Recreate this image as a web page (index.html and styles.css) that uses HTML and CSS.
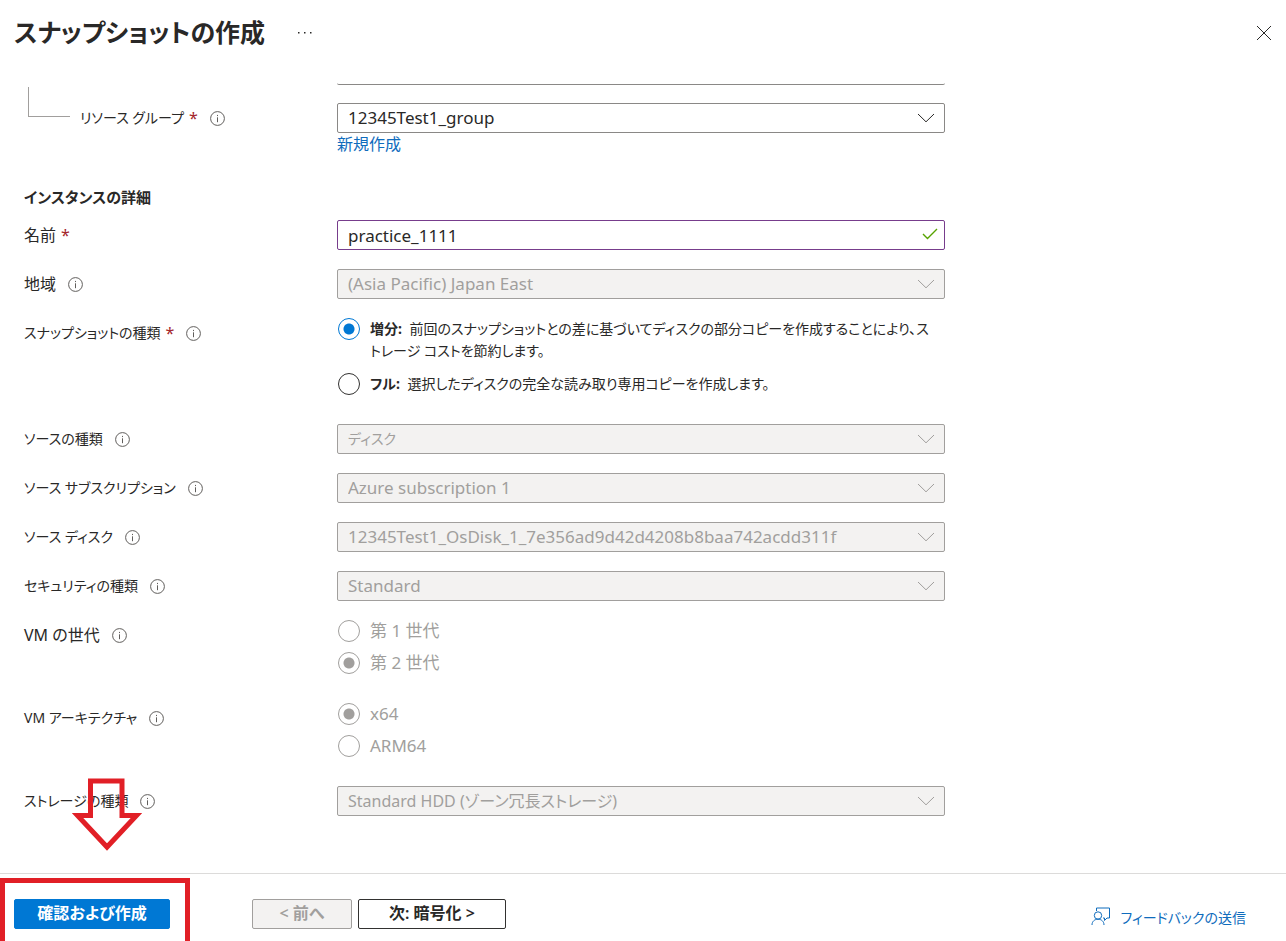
FILE: index.html
```html
<!DOCTYPE html>
<html lang="ja">
<head>
<meta charset="utf-8">
<title>スナップショットの作成</title>
<link rel="stylesheet" href="styles.css">
</head>
<body>
<svg class="sprite" aria-hidden="true">
  <symbol id="info" viewBox="0 0 15 15"><circle cx="7.5" cy="7.5" r="6.9"/><path d="M7.5 6.3v4.9M7.5 3.9v1.2"/></symbol>
  <symbol id="chevron" viewBox="0 0 18 10"><path d="M1 1l8 7.800l8-7.800"/></symbol>
</svg>
<header class="header">
  <h1 class="title">スナップショットの作成</h1>
  <button class="icon-button more" aria-label="その他"><svg width="16" height="4" viewBox="0 0 16 4"><path d="M1 1h1.500v1.500h-1.500zM7 1h1.500v1.500h-1.500zM13 1h1.500v1.500h-1.500z"/></svg></button>
  <button class="icon-button close" aria-label="閉じる"><svg width="16" height="16" viewBox="0 0 16 16"><path d="M1 1l14 14M15 1L1 15"/></svg></button>
</header>

<main class="form">
  <div class="row"><div class="field-end"></div></div>
  <div class="row">
    <div class="label nested"><label for="group">リソース グループ</label><span class="required">*</span><svg class="info"><use href="#info"/></svg></div>
    <div class="control">
      <div class="field"><select id="group"><option>12345Test1_group</option></select><svg class="chevron"><use href="#chevron"/></svg></div>
      <a class="create" href="#">新規作成</a>
    </div>
  </div>

  <h2 class="section">インスタンスの詳細</h2>
  <div class="row">
    <div class="label"><label class="kanji" for="name">名前</label><span class="required">*</span></div>
    <div class="field"><input class="valid" id="name" type="text" value="practice_1111"><svg class="check" viewBox="0 0 16 12"><path d="M1 6l4.500 4.500L15 1"/></svg></div>
  </div>
  <div class="row">
    <div class="label"><label class="kanji" for="region">地域</label><svg class="info"><use href="#info"/></svg></div>
    <div class="field"><select id="region" disabled><option>(Asia Pacific) Japan East</option></select><svg class="chevron"><use href="#chevron"/></svg></div>
  </div>
  <div class="row choices" role="radiogroup" aria-labelledby="kind">
    <div class="label"><span id="kind">スナップショットの種類</span><span class="required">*</span><svg class="info"><use href="#info"/></svg></div>
    <div class="radios described">
      <label class="radio"><input type="radio" name="kind" checked><span><b>増分:</b> 前回のスナップショットとの差に基づいてディスクの部分コピーを作成することにより、ストレージ コストを節約します。</span></label>
      <label class="radio"><input type="radio" name="kind"><span><b>フル:</b> 選択したディスクの完全な読み取り専用コピーを作成します。</span></label>
    </div>
  </div>
  <div class="row">
    <div class="label"><label for="source">ソースの種類</label><svg class="info"><use href="#info"/></svg></div>
    <div class="field"><select class="kana" id="source" disabled><option>ディスク</option></select><svg class="chevron"><use href="#chevron"/></svg></div>
  </div>
  <div class="row">
    <div class="label"><label for="subscription">ソース サブスクリプション</label><svg class="info"><use href="#info"/></svg></div>
    <div class="field"><select id="subscription" disabled><option>Azure subscription 1</option></select><svg class="chevron"><use href="#chevron"/></svg></div>
  </div>
  <div class="row">
    <div class="label"><label for="disk">ソース ディスク</label><svg class="info"><use href="#info"/></svg></div>
    <div class="field"><select id="disk" disabled><option>12345Test1_OsDisk_1_7e356ad9d42d4208b8baa742acdd311f</option></select><svg class="chevron"><use href="#chevron"/></svg></div>
  </div>
  <div class="row">
    <div class="label"><label for="security">セキュリティの種類</label><svg class="info"><use href="#info"/></svg></div>
    <div class="field"><select id="security" disabled><option>Standard</option></select><svg class="chevron"><use href="#chevron"/></svg></div>
  </div>
  <div class="row choices" role="radiogroup" aria-labelledby="generation">
    <div class="label"><span class="kanji" id="generation">VM の世代</span><svg class="info"><use href="#info"/></svg></div>
    <div class="radios">
      <label class="radio large"><input type="radio" name="generation" disabled><span>第 1 世代</span></label>
      <label class="radio large"><input type="radio" name="generation" disabled checked><span>第 2 世代</span></label>
    </div>
  </div>
  <div class="row choices" role="radiogroup" aria-labelledby="arch">
    <div class="label"><span id="arch">VM アーキテクチャ</span><svg class="info"><use href="#info"/></svg></div>
    <div class="radios">
      <label class="radio large"><input type="radio" name="arch" disabled checked><span>x64</span></label>
      <label class="radio large"><input type="radio" name="arch" disabled><span>ARM64</span></label>
    </div>
  </div>
  <div class="row">
    <div class="label"><label for="storage">ストレージの種類</label><svg class="info"><use href="#info"/></svg></div>
    <div class="field"><select class="mixed" id="storage" disabled><option>Standard HDD (ゾーン冗長ストレージ)</option></select><svg class="chevron"><use href="#chevron"/></svg></div>
  </div>
</main>

<footer class="footer">
  <button class="button primary">確認および作成</button>
  <button class="button previous" disabled>&lt; 前へ</button>
  <button class="button next">次: 暗号化 &gt;</button>
  <a class="feedback" href="#"><svg width="20" height="19" viewBox="0 0 20 19"><path d="M5.500 4V1h13v10h-2.500l-2.500 2.500v-2.500h-1.500"/><circle cx="7" cy="8.500" r="3.700"/><path d="M1 18c0-3.600 2.600-5.800 6-5.800s6 2.200 6 5.800"/></svg>フィードバックの送信</a>
  <div class="highlight"></div>
  <svg class="arrow" viewBox="0 0 70 74"><path d="M18.500 3h31.500v34.500h14.500L35 69L5.500 37.500h13z"/></svg>
</footer>
</body>
</html>
```
FILE: styles.css
```css
* { box-sizing: border-box; }
body {
  margin: 0;
  min-height: 100vh;
  display: flex;
  flex-direction: column;
  background: #fff;
  color: #292827;
  font: 14px/22px "Noto Sans", "Noto Sans CJK JP", sans-serif;
  font-feature-settings: "palt";
}
button, input, select {
  font: inherit;
  font-feature-settings: inherit;
  color: inherit;
}
svg { fill: none; stroke: currentColor; flex: none; }
a { color: #0f6cbd; text-decoration: none; }
.sprite { position: absolute; width: 0; height: 0; }

.header {
  display: flex;
  align-items: center;
  height: 64px;
  margin-bottom: 18px;
  padding: 0 14px;
}
.title { margin: 0; font-size: 25px; line-height: 36px; font-weight: 700; }
.icon-button {
  display: flex;
  padding: 2px 0 0;
  border: 0;
  background: none;
}
.more { margin-left: 32px; }
.more svg { fill: currentColor; stroke: none; }
.close { margin-left: auto; }

.form { flex: 1; padding: 0 24px; }
.row {
  display: grid;
  grid-template-columns: 313px minmax(0, 608px);
  margin-bottom: 19px;
}
.choices { margin-bottom: 29px; }
.field-end {
  grid-column: 2;
  height: 3px;
  border-bottom: 1px solid #8a8886;
  border-radius: 0 0 2px 2px;
}
.label {
  display: flex;
  align-items: center;
  height: 30px;
  white-space: nowrap;
}
.kanji { font-size: 16px; }
.nested::before {
  content: "";
  align-self: flex-start;
  width: 41px;
  height: 29px;
  margin: -16px 10px 0 4px;
  border: solid #a19f9d;
  border-width: 0 0 1px 1px;
}
.required { margin-left: 5px; color: #a4262c; font-size: 16px; }
.info { width: 15px; height: 15px; margin-left: 12px; color: #605e5c; }
.field { position: relative; height: 30px; }
.field select, .field input {
  display: block;
  width: 100%;
  height: 30px;
  padding: 0 40px 0 10px;
  border: 1px solid #8a8886;
  border-radius: 2px;
  background: #fff;
  appearance: none;
  outline: 0;
  font-size: 17px;
}
.field select:disabled {
  border-color: #a19f9d;
  background: #f3f2f1;
  color: #a19f9d;
  opacity: 1;
}
.field .valid { border-color: #773d8c; }
.field .kana { font-size: 14px; }
.field .mixed { font-size: 16px; }
.chevron, .check { position: absolute; pointer-events: none; }
.chevron { top: 10px; right: 10px; width: 18px; height: 10px; }
select:disabled + .chevron { color: #a19f9d; }
.check { top: 8px; right: 7px; width: 16px; height: 12px; stroke: #57a300; stroke-width: 1.4; }
.create { display: block; width: max-content; font-size: 16px; }
.row:has(.create) { margin-bottom: 31px; }
.row:has(.field-end) { margin-bottom: 18px; }
.section { margin: 0 0 12px; font-size: 15px; line-height: 22px; font-weight: 700; }

.radios { display: grid; gap: 10px; align-content: start; }
.described { gap: 11px; padding-right: 8px; }
.radio { display: flex; gap: 10px; padding-left: 1px; }
.radio.large { font-size: 17px; }
.radio b { margin-right: 4px; }
.radio input {
  flex: none;
  width: 22px;
  height: 22px;
  margin: 0;
  border: 1px solid #323130;
  border-radius: 50%;
  appearance: none;
}
.radio input:checked {
  border-color: #0078d4;
  background: radial-gradient(circle, #0078d4 5px, transparent 6px);
}
.radio input:disabled { border-color: #a19f9d; }
.radio input:disabled:checked { background: radial-gradient(circle, #a19f9d 5px, transparent 6px); }
.radio:has(:disabled) { color: #a19f9d; }

.footer {
  position: relative;
  display: flex;
  align-items: flex-start;
  height: 68px;
  padding: 25px 40px 0 14px;
  border-top: 1px solid #dcdbda;
}
.button {
  height: 30px;
  padding: 0 0 2px;
  border: 1px solid #323130;
  border-radius: 2px;
  background: #fff;
  font-size: 16px;
  line-height: 22px;
  font-weight: 600;
  white-space: nowrap;
}
.primary { width: 156px; border-color: #0078d4; background: #0078d4; color: #fff; }
.previous { width: 100px; margin-left: 82px; border-color: #a19f9d; background: #f3f2f1; color: #a19f9d; }
.next { width: 148px; margin-left: 6px; }
.feedback {
  display: flex;
  gap: 10px;
  margin-left: auto;
  padding-top: 8px;
}
.highlight {
  position: absolute;
  top: 4px;
  bottom: 0;
  left: 0;
  width: 190px;
  border: 5px solid #e11f26;
  border-bottom: 0;
}
.arrow {
  position: absolute;
  top: -96px;
  left: 72px;
  width: 70px;
  height: 74px;
  color: #e11f26;
  stroke-width: 5;
}
```
